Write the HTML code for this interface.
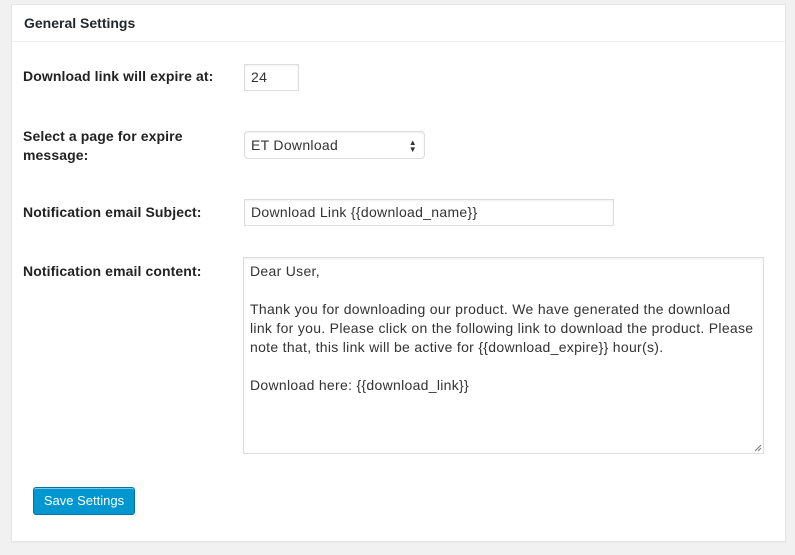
<!DOCTYPE html>
<html><head><style>
body{margin:0;background:#f1f1f1;width:795px;height:555px;font-family:"Liberation Sans",sans-serif;color:#222;font-size:14px;position:relative;overflow:hidden}
.panel{position:absolute;left:11px;top:4px;width:775px;height:538px;background:#fff;border:1px solid #e5e5e5;box-shadow:0 1px 1px rgba(0,0,0,.04);box-sizing:border-box}
.hd{position:absolute;left:0;top:0;right:0;height:36px;border-bottom:1px solid #eee}
.hd span{position:absolute;left:12px;top:10px;font-weight:bold;font-size:14px;color:#23282d}
.lbl{position:absolute;left:23px;font-weight:bold;font-size:14px;line-height:19px;color:#222;letter-spacing:0.1px}
.in{position:absolute;background:#fff;border:1px solid #ddd;box-shadow:inset 0 1px 2px rgba(0,0,0,.07);box-sizing:border-box;font-size:14px;color:#333;padding-left:6px;letter-spacing:0.3px}
.btn{position:absolute;left:33px;top:487px;width:102px;height:28px;background:#0097d0;border:1px solid #0073aa;border-radius:3px;box-sizing:border-box;color:#fff;font-size:13px;text-align:center;line-height:26px;box-shadow:inset 0 1px 0 #78c8e6}
</style></head><body>
<div class="panel"><div class="hd"><span>General Settings</span></div></div>
<div class="lbl" style="top:67px">Download link will expire at:</div>
<div class="in" style="left:244px;top:64px;width:55px;height:27px;line-height:25px">24</div>
<div class="lbl" style="top:127px">Select a page for expire<br>message:</div>
<div class="in" style="left:244px;top:131px;width:181px;height:28px;line-height:26px;border-radius:4px">ET Download<span style="position:absolute;right:7px;top:0;font-size:8px;line-height:7px;padding-top:7px;color:#333">▲<br>▼</span></div>
<div class="lbl" style="top:203px">Notification email Subject:</div>
<div class="in" style="left:244px;top:199px;width:370px;height:27px;line-height:25px">Download Link {{download_name}}</div>
<div class="lbl" style="top:262px">Notification email content:</div>
<div class="in" style="left:243px;top:257px;width:521px;height:197px;padding:4px 6px;line-height:19px;letter-spacing:0.3px;white-space:nowrap;overflow:hidden">Dear User,<br><br>Thank you for downloading our product. We have generated the download<br>link for you. Please click on the following link to download the product. Please<br>note that, this link will be active for {{download_expire}} hour(s).<br><br>Download here: {{download_link}}
<svg style="position:absolute;right:1px;bottom:1px" width="8" height="8"><path d="M1 7L7 1M4 7L7 4" stroke="#777" stroke-width="1"/></svg></div>
<div class="btn">Save Settings</div>
</body></html>
